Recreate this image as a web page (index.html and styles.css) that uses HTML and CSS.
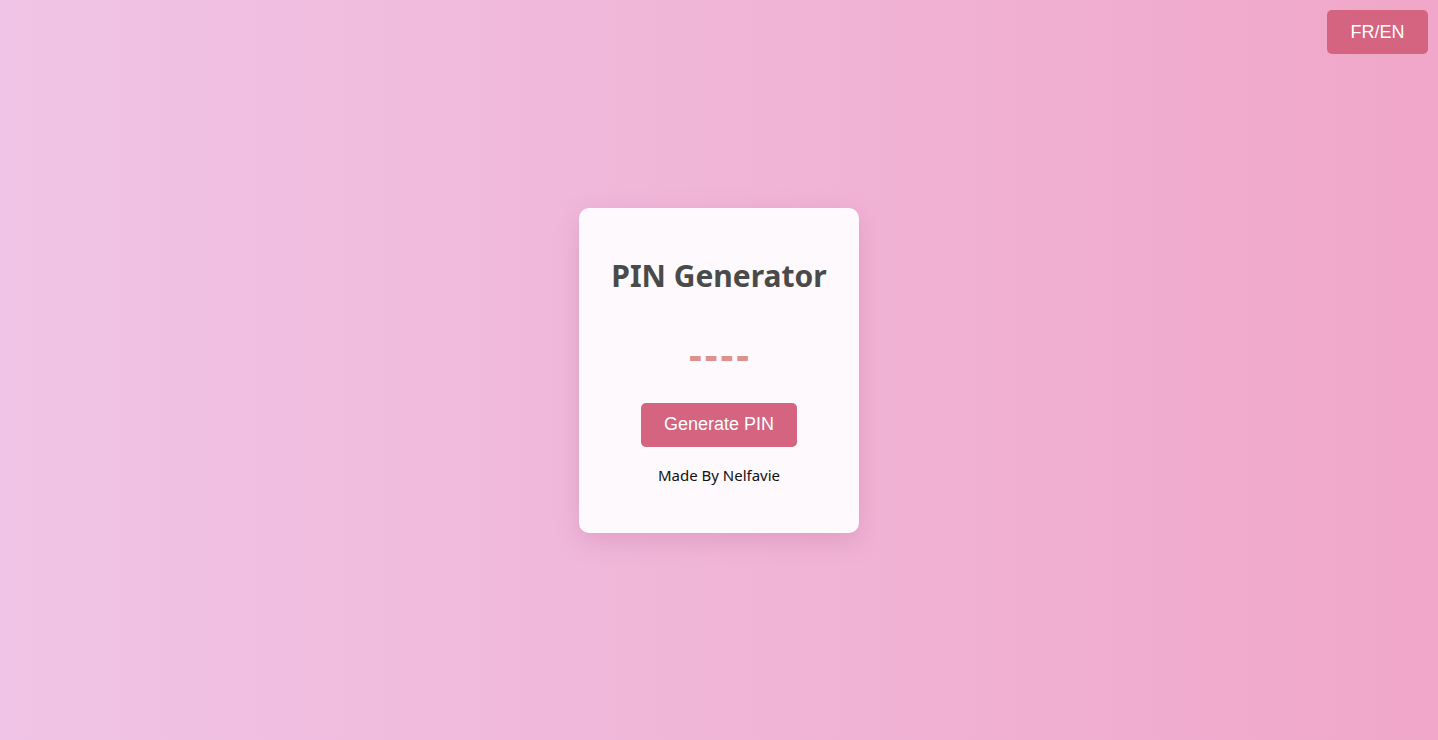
FILE: index.html
```html
<!DOCTYPE html>
<html lang="en">
<head>
<meta charset="utf-8">
<title>PIN Generator</title>
<link rel="stylesheet" href="styles.css">
</head>
<body>
<button class="lang-btn">FR/EN</button>
<main class="card">
  <h1 class="title">PIN Generator</h1>
  <div class="pin">----</div>
  <button class="gen-btn">Generate PIN</button>
  <p class="credit">Made By Nelfavie</p>
</main>
</body>
</html>
```

FILE: styles.css
```css
html, body {
  margin: 0;
  height: 100%;
}
body {
  background: linear-gradient(to right, #f0c4e6, #f0a7c9);
  display: flex;
  align-items: center;
  justify-content: center;
  font-family: "Noto Sans", "Open Sans", sans-serif;
}
.lang-btn {
  position: absolute;
  top: 10px;
  right: 10px;
  width: 101px;
  height: 44px;
  border: none;
  border-radius: 5px;
  background: #d4647f;
  color: #fff;
  font-family: "Liberation Sans", Arial, sans-serif;
  font-size: 18px;
}
.card {
  width: 280px;
  height: 325px;
  box-sizing: border-box;
  background: #fdf9fc;
  border-radius: 10px;
  box-shadow: 0 8px 24px rgba(180, 90, 140, 0.25);
  display: flex;
  flex-direction: column;
  align-items: center;
  padding-top: 48px;
}
.title {
  margin: 0;
  font-size: 30px;
  font-weight: 700;
  color: #4a4a4a;
  line-height: 40px;
}
.pin {
  margin-top: 38px;
  font-size: 40px;
  font-weight: 700;
  letter-spacing: 3px;
  padding-left: 3px;
  color: #e0908f;
  line-height: 40px;
  height: 40px;
}
.gen-btn {
  margin-top: 29px;
  width: 156px;
  height: 44px;
  border: none;
  border-radius: 5px;
  background: #d4647f;
  color: #fff;
  font-family: "Liberation Sans", Arial, sans-serif;
  font-size: 18px;
}
.credit {
  margin: 18px 0 0;
  font-size: 15px;
  color: #111;
}
```
